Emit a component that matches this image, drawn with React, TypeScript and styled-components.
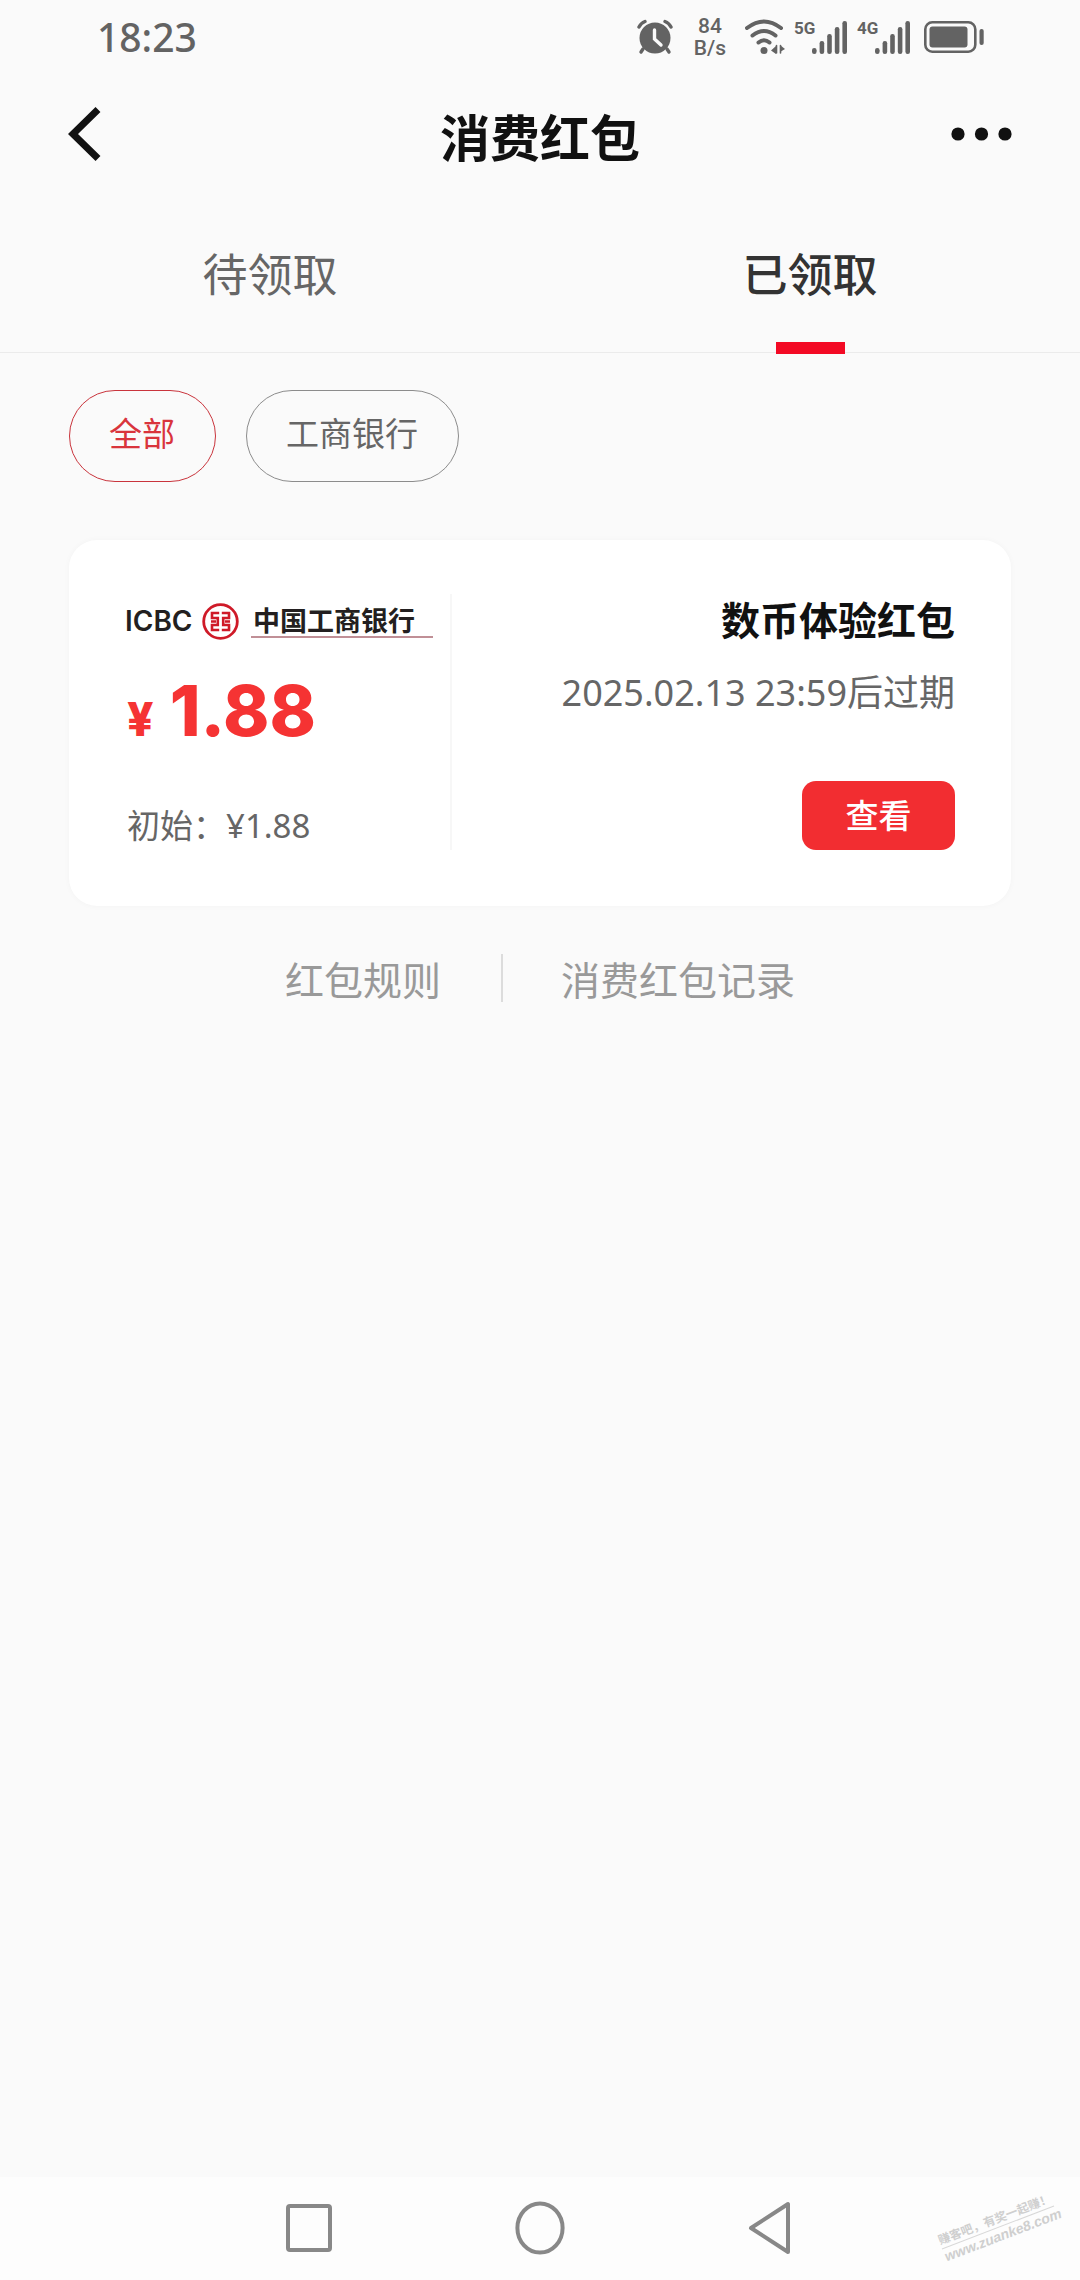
import React from "react";
import styled, { createGlobalStyle } from "styled-components";

const fontStack = `"Noto Sans", "Noto Sans CJK SC", sans-serif`;
const cjkStack = `"Noto Sans CJK SC", sans-serif`;

const GlobalStyle = createGlobalStyle`
  * { box-sizing: border-box; }
  body { margin: 0; background: #fafafa; font-family: ${fontStack}; }
  button { font: inherit; padding: 0; border: 0; background: none; cursor: pointer; }
  a { color: inherit; text-decoration: none; }
  svg { display: block; }
`;

const Screen = styled.div`
  display: flex;
  flex-direction: column;
  min-height: 100vh;
  position: relative;
  overflow: hidden;
`;

const StatusBar = styled.div`
  display: flex;
  align-items: center;
  justify-content: space-between;
  height: 74px;
  padding: 0 96px 0 97px;
  color: #636363;
`;

const Clock = styled.time`
  font-size: 39px;
  line-height: 48px;
  font-weight: 500;
`;

const StatusIcons = styled.div`
  display: flex;
  align-items: center;
`;

const NetSpeed = styled.div`
  display: flex;
  flex-direction: column;
  width: 36px;
  margin: 0 17px 0 19px;
  font-family: Roboto, sans-serif;
  font-size: 21px;
  line-height: 22px;
  font-weight: 500;
  text-align: center;
`;

const Signal = styled.div`
  display: flex;
  align-items: flex-start;
  margin-left: 9px;
  height: 36px;
`;

const SignalLabel = styled.span`
  width: 18px;
  font-family: Roboto, sans-serif;
  font-size: 17px;
  line-height: 18px;
  font-weight: 700;
  white-space: nowrap;
`;

const BatteryBox = styled.div`
  margin-left: 13px;
`;

const Header = styled.header`
  display: grid;
  grid-template-columns: 1fr auto 1fr;
  align-items: center;
  height: 120px;
  padding: 0 68px;
  color: #111;
`;

const IconButton = styled.button<{ $end?: boolean }>`
  justify-self: ${(p) => (p.$end ? "end" : "start")};
  color: inherit;
`;

const PageTitle = styled.h1`
  margin: 0;
  padding-top: 2px;
  font-family: ${cjkStack};
  font-size: 50px;
  line-height: 72px;
  font-weight: 700;
`;

const Tabs = styled.nav`
  display: grid;
  grid-template-columns: 1fr 1fr;
  height: 159px;
  border-bottom: 1px solid #ebebeb;
`;

const Tab = styled.button<{ $active?: boolean }>`
  display: flex;
  flex-direction: column;
  align-items: center;
  justify-content: space-between;
  padding-top: 46px;
  margin-bottom: -2px;
  font-family: ${cjkStack};
  font-size: 45px;
  line-height: 66px;
  font-weight: ${(p) => (p.$active ? 500 : 400)};
  color: ${(p) => (p.$active ? "#333" : "#666")};

  &::after {
    content: "";
    width: 69px;
    height: 12px;
    background: ${(p) => (p.$active ? "#f30a24" : "transparent")};
  }
`;

const Main = styled.main`
  flex: 1;
  padding: 37px 69px 0;
`;

const Filters = styled.div`
  display: flex;
  gap: 30px;
`;

const Pill = styled.button<{ $active?: boolean }>`
  height: 92px;
  padding: 0 40px 8px 39px;
  border: 1px solid ${(p) => (p.$active ? "#c9343c" : "#8c8c8c")};
  border-radius: 46px;
  font-family: ${cjkStack};
  font-size: 33px;
  line-height: 48px;
  color: ${(p) => (p.$active ? "#d9343c" : "#666")};
`;

const Card = styled.article`
  display: flex;
  margin-top: 58px;
  padding: 54px 56px 56px;
  height: 366px;
  border-radius: 28px;
  background: #fff;
  box-shadow: 0 0 6px rgba(0, 0, 0, 0.03);
`;

const Amounts = styled.div`
  display: flex;
  flex-direction: column;
  width: 327px;
  border-right: 2px solid #f7f7f7;
`;

const BankLogo = styled.div`
  display: flex;
  align-items: center;
  height: 54px;
  color: #231f20;
`;

const BankCode = styled.span`
  width: 66px;
  margin-right: 11px;
  font-family: Inter, sans-serif;
  font-size: 28px;
  line-height: 36px;
  font-weight: 600;
`;

const BankName = styled.span`
  margin-left: 12px;
  width: 182px;
  padding: 0 2px;
  border-bottom: 2px solid #c08f96;
  font-family: ${cjkStack};
  font-size: 27px;
  line-height: 32px;
  font-weight: 700;
  white-space: nowrap;
`;

const Price = styled.div`
  display: flex;
  align-items: baseline;
  gap: 16px;
  margin: 21px 0 0 2px;
  font-family: Inter, sans-serif;
  font-size: 70px;
  line-height: 84px;
  font-weight: 800;
  color: #f53333;
`;

const Currency = styled.span`
  font-size: 46px;
`;

const Initial = styled.div`
  margin: auto 0 0 2px;
  font-size: 33px;
  line-height: 48px;
  color: #666;
`;

const Details = styled.div`
  display: flex;
  flex: 1;
  flex-direction: column;
  align-items: flex-end;
`;

const CardTitle = styled.h2`
  margin: 0;
  font-family: ${cjkStack};
  font-size: 39px;
  line-height: 48px;
  font-weight: 700;
  color: #111;
`;

const Expiry = styled.p`
  margin: 24px 0 0;
  font-size: 36px;
  line-height: 54px;
  color: #666;
`;

const ViewButton = styled.button`
  width: 153px;
  height: 69px;
  margin-top: auto;
  padding-bottom: 4px;
  border-radius: 14px;
  background: #f22d31;
  font-family: ${cjkStack};
  font-size: 33px;
  font-weight: 500;
  color: #fff;
`;

const Links = styled.div`
  display: flex;
  justify-content: center;
  align-items: flex-start;
  margin-top: 42px;
  font-family: ${cjkStack};
  font-size: 39px;
  line-height: 60px;
  color: #999;
`;

const Separator = styled.span`
  width: 2px;
  height: 48px;
  margin: 6px 58px 0 60px;
  background: #dcdcdc;
`;

const NavBar = styled.nav`
  display: grid;
  grid-template-columns: 1fr auto 1fr;
  align-items: center;
  gap: 183px;
  height: 103px;
  padding-bottom: 2px;
  background: #fdfdfd;
  color: #888;
`;

const Watermark = styled.div`
  position: absolute;
  right: 22px;
  bottom: 36px;
  width: 120px;
  transform: rotate(-21deg);
  font-family: "Liberation Sans", ${cjkStack};
  font-size: 12px;
  line-height: 16px;
  font-weight: 700;
  color: #cfcfcf;
  white-space: nowrap;
`;

const WatermarkSite = styled.div`
  border-top: 1px solid #d8d8d8;
  font-size: 14px;
  font-style: italic;
`;

function AlarmIcon() {
  return (
    <svg width="36" height="36" viewBox="0 0 36 36" fill="none" stroke="currentColor" strokeLinecap="round">
      <circle cx="18" cy="19" r="15.5" fill="currentColor" stroke="none" />
      <path d="M2 8 Q4 4 8 2.5M34 8 Q32 4 28 2.5" strokeWidth="3.4" />
      <path d="M6 30 L4 33M30 30 L32 33" strokeWidth="3.4" />
      <path d="M17.5 11 V20 L24 26" stroke="#fafafa" strokeWidth="3.4" />
    </svg>
  );
}

function WifiIcon() {
  return (
    <svg width="40" height="36" viewBox="0 0 40 36" fill="none" stroke="currentColor" strokeLinecap="round">
      <path d="M2 9 Q19 -4 36 9" strokeWidth="4" />
      <path d="M7.5 16.5 Q19 7.500 30.5 16.5" strokeWidth="4" />
      <path d="M13.5 23.5 Q19 19 24.5 23.5" strokeWidth="4" />
      <circle cx="19" cy="31.500" r="3.5" fill="currentColor" stroke="none" />
      <path d="M26 31.5 L31 27 V35 M40 30 L35 33 V26" fill="currentColor" stroke="none" />
      <path d="M31.5 26.5 V34M35.5 26.5 V34" strokeWidth="1.6" />
    </svg>
  );
}

function SignalBars() {
  const tops = [29, 22, 15, 8, 2];
  return (
    <svg width="36" height="36" viewBox="0 0 36 36" fill="currentColor">
      {tops.map((top, i) => (
        <rect key={top} x={i * 7.6} y={top} width="4.6" height={35 - top} rx="2.2" />
      ))}
    </svg>
  );
}

function BatteryIcon() {
  return (
    <svg width="60" height="32" viewBox="0 0 60 32" fill="currentColor">
      <rect x="1.3" y="1.3" width="50" height="29.4" rx="7" fill="none" stroke="currentColor" strokeWidth="2.6" />
      <rect x="5.5" y="5.5" width="38" height="21" rx="3" />
      <rect x="55.5" y="8" width="4.2" height="16" rx="2" />
    </svg>
  );
}

function BankEmblem() {
  return (
    <svg width="37" height="37" viewBox="0 0 37 37" fill="none" stroke="#cf1a28">
      <circle cx="18.5" cy="18.5" r="16.8" strokeWidth="2.8" />
      <path
        d="M17.200 10 H10 V15 H15.800 V22 H10 V27 H17.200 M19.800 10 H27 V15 H21.200 V22 H27 V27 H19.800 M9 18.500 H14 M23 18.500 H28"
        strokeWidth="2.6"
      />
    </svg>
  );
}

export default function App() {
  return (
    <Screen>
      <GlobalStyle />
      <StatusBar>
        <Clock>18:23</Clock>
        <StatusIcons>
          <AlarmIcon />
          <NetSpeed>
            <span>84</span>
            <span>B/s</span>
          </NetSpeed>
          <WifiIcon />
          <Signal>
            <SignalLabel>5G</SignalLabel>
            <SignalBars />
          </Signal>
          <Signal>
            <SignalLabel>4G</SignalLabel>
            <SignalBars />
          </Signal>
          <BatteryBox>
            <BatteryIcon />
          </BatteryBox>
        </StatusIcons>
      </StatusBar>

      <Header>
        <IconButton aria-label="返回">
          <svg width="34" height="54" viewBox="0 0 34 54" fill="none" stroke="currentColor" strokeWidth="7">
            <path d="M30 2.5 L5 27 L30 51.5" />
          </svg>
        </IconButton>
        <PageTitle>消费红包</PageTitle>
        <IconButton $end aria-label="更多">
          <svg width="61" height="14" viewBox="0 0 61 14" fill="currentColor">
            <circle cx="7" cy="7" r="6.6" />
            <circle cx="30.5" cy="7" r="6.6" />
            <circle cx="54" cy="7" r="6.6" />
          </svg>
        </IconButton>
      </Header>

      <Tabs>
        <Tab>待领取</Tab>
        <Tab $active>已领取</Tab>
      </Tabs>

      <Main>
        <Filters>
          <Pill $active>全部</Pill>
          <Pill>工商银行</Pill>
        </Filters>

        <Card>
          <Amounts>
            <BankLogo>
              <BankCode>ICBC</BankCode>
              <BankEmblem />
              <BankName>中国工商银行</BankName>
            </BankLogo>
            <Price>
              <Currency>¥</Currency>
              <span>1.88</span>
            </Price>
            <Initial>初始：¥1.88</Initial>
          </Amounts>
          <Details>
            <CardTitle>数币体验红包</CardTitle>
            <Expiry>2025.02.13 23:59后过期</Expiry>
            <ViewButton>查看</ViewButton>
          </Details>
        </Card>

        <Links>
          <a href="#rules">红包规则</a>
          <Separator />
          <a href="#records">消费红包记录</a>
        </Links>
      </Main>

      <NavBar>
        <IconButton $end aria-label="最近任务">
          <svg width="46" height="48" viewBox="0 0 46 48" fill="none" stroke="currentColor" strokeWidth="4">
            <rect x="2" y="2" width="42" height="44" rx="2" />
          </svg>
        </IconButton>
        <IconButton aria-label="主屏幕">
          <svg width="50" height="54" viewBox="0 0 50 54" fill="none" stroke="currentColor" strokeWidth="4">
            <ellipse cx="25" cy="27" rx="22.6" ry="24.6" />
          </svg>
        </IconButton>
        <IconButton aria-label="返回上一级">
          <svg width="46" height="54" viewBox="0 0 46 54" fill="none" stroke="currentColor" strokeWidth="4" strokeLinejoin="round">
            <path d="M40 3 V51 L3 27 Z" />
          </svg>
        </IconButton>
      </NavBar>

      <Watermark>
        <div>赚客吧，有奖一起赚！</div>
        <WatermarkSite>www.zuanke8.com</WatermarkSite>
      </Watermark>
    </Screen>
  );
}
